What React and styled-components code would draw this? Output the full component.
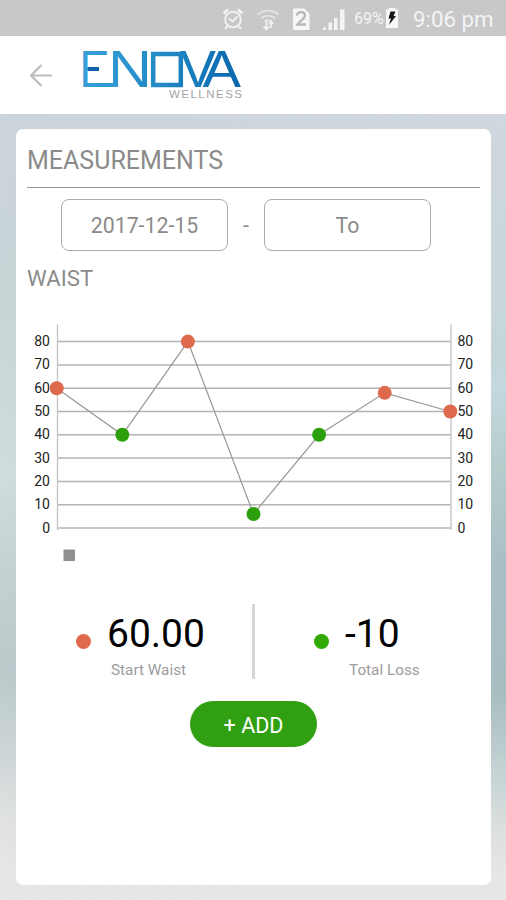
import styled, { createGlobalStyle } from 'styled-components';

const readings = [60, 40, 80, 6, 40, 58, 50];
const ticks = [80, 70, 60, 50, 40, 30, 20, 10, 0];

const LEFT = 41;
const RIGHT = 434.5;
const BASE = 210;
const valueY = (v) => BASE - v * 2.33;
const pointX = (i) => LEFT - 0.3 + i * 65.6;
// readings of 50 and more are marked red
const pointColor = (v) => (v >= 50 ? '#df694d' : '#2c9f0c');

function StatusIcons() {
    return (
        <Icons viewBox="0 0 129 26" fill="none" stroke="#f2f2f2" strokeWidth="2">
            <circle cx="12" cy="13.5" r="7.8" />
            <path d="M8 12.5l3.5 3 5-5M6.5 20l-2.5 3M17.5 20l2.5 3" />
            <path d="M2.5 7.5l4.5-4M17 3.5l4.5 4" strokeWidth="2.6" />
            <g stroke="#e4e4e4" strokeWidth="1.8">
                <path d="M37 8.5c6-5.3 14.5-5.3 20.5 0M40 12.5c4-3.8 10-3.8 14.5 0" />
                <path d="M43.5 15.5c2.2-1.7 5-1.7 7.2 0" />
            </g>
            <path d="M45.5 14.5v9M42.5 20.5l3 3 2.5-3M50 22v-6M48 18l2-2.5 2 2.5" strokeWidth="1.8" />
            <path d="M73 2.5h10l5.5 5v16.5H72V3.5z" fill="#f6f6f6" stroke="none" />
            <path d="M76 9.500c0-4.500 8-4.500 8 0 0 3-5 5-7.500 9H85" stroke="#b8b8b8" strokeWidth="2.300" />
            <g fill="#f4f4f4" stroke="none">
                <path d="M102 21.500h3V24h-3zM107.500 16.500h3.500V24h-3.500zM113 12h3.500v12H113z" />
                <path d="M119 3.500h4.500V24H119z" />
            </g>
        </Icons>
    );
}

function Battery() {
    return (
        <svg width="14" height="22" viewBox="0 0 14 22">
            <path d="M3.500 2.500V1h7v1.500H13V21H1V2.500z" fill="#f7f7f7" />
            <path d="M5.500 4.500h5L8.500 9h2.500l-7 9 2-6.500H3.500z" fill="#181818" />
        </svg>
    );
}

function Logo() {
    return (
        <Brand viewBox="0 0 162 54" aria-label="Enova Wellness">
            <defs>
                <linearGradient id="blue" gradientUnits="userSpaceOnUse" x1="0" y1="0" x2="160" y2="20">
                    <stop offset="0" stopColor="#39a0d8" />
                    <stop offset="0.5" stopColor="#2389c6" />
                    <stop offset="1" stopColor="#0768ae" />
                </linearGradient>
            </defs>
            <BrandLetter x="-2.500" y="37" textLength="30">E</BrandLetter>
            <BrandLetter x="26" y="37" textLength="44">N</BrandLetter>
            <BrandLetter x="98" y="37" textLength="36">V</BrandLetter>
            <BrandLetter x="120.500" y="37" textLength="38.500">A</BrandLetter>
            {/* box between the letters, base and middle bars on the left */}
            <rect x="71.200" y="4" width="27.600" height="31" fill="none" stroke="url(#blue)" strokeWidth="4.500" />
            <rect x="20" y="33" width="14.500" height="4" fill="#329ad2" />
            <rect x="6" y="17" width="11" height="4" fill="#125fa9" />
            <rect x="17" y="16" width="9" height="6" fill="#fff" />
            <BrandSub x="87" y="48" textLength="73">WELLNESS</BrandSub>
        </Brand>
    );
}

function Chart() {
    const points = readings.map((v, i) => `${pointX(i)},${valueY(v)}`).join(' ');

    return (
        <Plot viewBox="0 0 475 250">
            {ticks.map((t) => (
                <g key={t}>
                    <line x1={LEFT} x2={RIGHT} y1={valueY(t)} y2={valueY(t)} stroke="#b4b4b4" strokeWidth="1.500" />
                    <TickLabel x="34" y={valueY(t) + 4.500} textAnchor="end">{t}</TickLabel>
                    <TickLabel x="441.500" y={valueY(t) + 4.500}>{t}</TickLabel>
                </g>
            ))}
            <path d={`M${LEFT + 0.5} 6.500V212M${RIGHT + 0.5} 6.500V212`} stroke="#c2c2c2" strokeWidth="1.300" />
            <polyline points={points} fill="none" stroke="#989898" strokeWidth="1.200" />
            {readings.map((v, i) => (
                <circle key={i} cx={pointX(i)} cy={valueY(v)} r="7" fill={pointColor(v)} />
            ))}
            <rect x="47.500" y="231.500" width="11.500" height="11.500" fill="#8f9191" />
        </Plot>
    );
}

export default function App() {
    return (
        <>
            <GlobalStyle />
            <Screen>
                <StatusBar>
                    <StatusIcons />
                    <Percent>69%</Percent>
                    <Battery />
                    <Clock>9:06 pm</Clock>
                </StatusBar>
                <Header>
                    <svg width="24" height="24" viewBox="0 0 24 24" fill="none" stroke="#bdbdbd" strokeWidth="2.200">
                        <path d="M23 12.500H2.500M12.500 2L2 12.500 12.500 23" />
                    </svg>
                    <Logo />
                </Header>
                <Content>
                    <Card>
                        <Title>MEASUREMENTS</Title>
                        <Dates>
                            <DateField>2017-12-15</DateField>
                            <span>-</span>
                            <DateField>To</DateField>
                        </Dates>
                        <Subtitle>WAIST</Subtitle>
                        <Chart />
                        <Stats>
                            <Stat $left="60px">
                                <Dot $color="#e0694d" />
                                <div>
                                    <Value>60.00</Value>
                                    <Caption $indent="4px">Start Waist</Caption>
                                </div>
                            </Stat>
                            <Divider />
                            <Stat $left="59px">
                                <Dot $color="#32aa06" />
                                <div>
                                    <Value>-10</Value>
                                    <Caption $indent="4px">Total Loss</Caption>
                                </div>
                            </Stat>
                        </Stats>
                        <AddButton>+ ADD</AddButton>
                    </Card>
                </Content>
            </Screen>
        </>
    );
}

const GlobalStyle = createGlobalStyle`
    * {
        box-sizing: border-box;
    }
    body {
        margin: 0;
        font-family: Roboto, sans-serif;
        color: #8b8b8b;
    }
`;

const Screen = styled.div`
    display: flex;
    flex-direction: column;
    width: 506px;
    height: 900px;
    overflow: hidden;
`;

const StatusBar = styled.div`
    display: flex;
    align-items: center;
    flex-shrink: 0;
    height: 36px;
    padding-left: 221px;
    background-color: #c8c8c8;
    color: #f4f4f4;
`;

const Icons = styled.svg`
    width: 129px;
    height: 26px;
    margin-top: 1px;
`;

const Percent = styled.span`
    width: 35px;
    padding: 1px 0 0 4px;
    font-size: 16px;
    white-space: nowrap;
`;

const Clock = styled.span`
    padding: 1px 0 0 14px;
    font-size: 22.3px;
    white-space: nowrap;
`;

const Header = styled.header`
    display: flex;
    align-items: center;
    flex-shrink: 0;
    gap: 29px;
    height: 78px;
    padding-left: 29px;
    background-color: #fff;
`;

const Brand = styled.svg`
    width: 162px;
    height: 54px;
    margin-top: 4px;
    overflow: visible;
`;

const BrandLetter = styled.text.attrs({ lengthAdjust: 'spacingAndGlyphs' })`
    font-family: "Liberation Sans", sans-serif;
    font-size: 51px;
    fill: url(#blue);
`;

const BrandSub = styled.text`
    font-family: "Liberation Sans", sans-serif;
    font-size: 11.5px;
    fill: #a3a3a3;
`;

const Content = styled.main`
    position: relative;
    flex: 1;
    padding: 15px 15px 15px 16px;
    background: linear-gradient(#ccd4dc, #c8d5d6 24%, #d2dddd 46%, #c3d2d1 59%, #bccacc 71%, #cdd5d7 81%, #dfe1e1 89%, #e6e6e6 96%);

    /* cooler tones towards the right edge */
    &::before {
        content: '';
        position: absolute;
        inset: 0;
        background: linear-gradient(#d0d7df, #c5d6d8 30%, #c3d7de 35%, #b5cccb 45%, #a9bfc5 57%, #a9bdc1 74%, #c5d3d3 84%, #dcdfdf 91%, #e6e6e6 97%);
        mask-image: linear-gradient(to right, transparent, #000);
    }
`;

const Card = styled.section`
    position: relative;
    display: flex;
    flex-direction: column;
    height: 756px;
    border-radius: 7px;
    background-color: #fff;
`;

const Title = styled.h1`
    height: 59px;
    margin: 0 11px;
    border-bottom: 1.5px solid #969696;
    font-size: 25px;
    font-weight: 400;
    line-height: 63px;
`;

const Dates = styled.div`
    display: flex;
    align-items: center;
    gap: 15px;
    margin: 11px 0 0 45px;
    font-size: 21.3px;
`;

const DateField = styled.div`
    display: flex;
    align-items: center;
    justify-content: center;
    width: 167px;
    height: 52px;
    padding-top: 1px;
    border: 1.5px solid #aaa;
    border-radius: 8px;
`;

const Subtitle = styled.h2`
    margin: 13px 0 0 11px;
    font-size: 22.2px;
    font-weight: 400;
    line-height: 28px;
`;

const Plot = styled.svg`
    flex-shrink: 0;
    width: 475px;
    height: 250px;
    margin-top: 26px;
`;

const TickLabel = styled.text`
    font-size: 14px;
    fill: #222;
`;

const Stats = styled.div`
    display: flex;
    height: 76px;
    margin-top: 36px;
`;

const Stat = styled.div`
    display: flex;
    align-items: flex-start;
    gap: 16px;
    width: 236px;
    padding-left: ${(props) => props.$left};
`;

const Divider = styled.div`
    width: 3px;
    height: 75px;
    background-color: #d6d6d6;
`;

const Dot = styled.span`
    width: 15px;
    height: 15px;
    margin-top: 30px;
    border-radius: 50%;
    background-color: ${(props) => props.$color};
`;

const Value = styled.div`
    padding-top: 7px;
    font-size: 39px;
    line-height: 46px;
    color: #000;
`;

const Caption = styled.div`
    padding-left: ${(props) => props.$indent};
    font-size: 15.3px;
    line-height: 26px;
    color: #9c9c9c;
`;

const AddButton = styled.button`
    align-self: center;
    width: 127px;
    height: 46px;
    margin-top: 21px;
    padding: 2px 0 0;
    border: none;
    border-radius: 23px;
    background-color: #319f12;
    color: #fff;
    font-family: inherit;
    font-size: 21.5px;
`;
